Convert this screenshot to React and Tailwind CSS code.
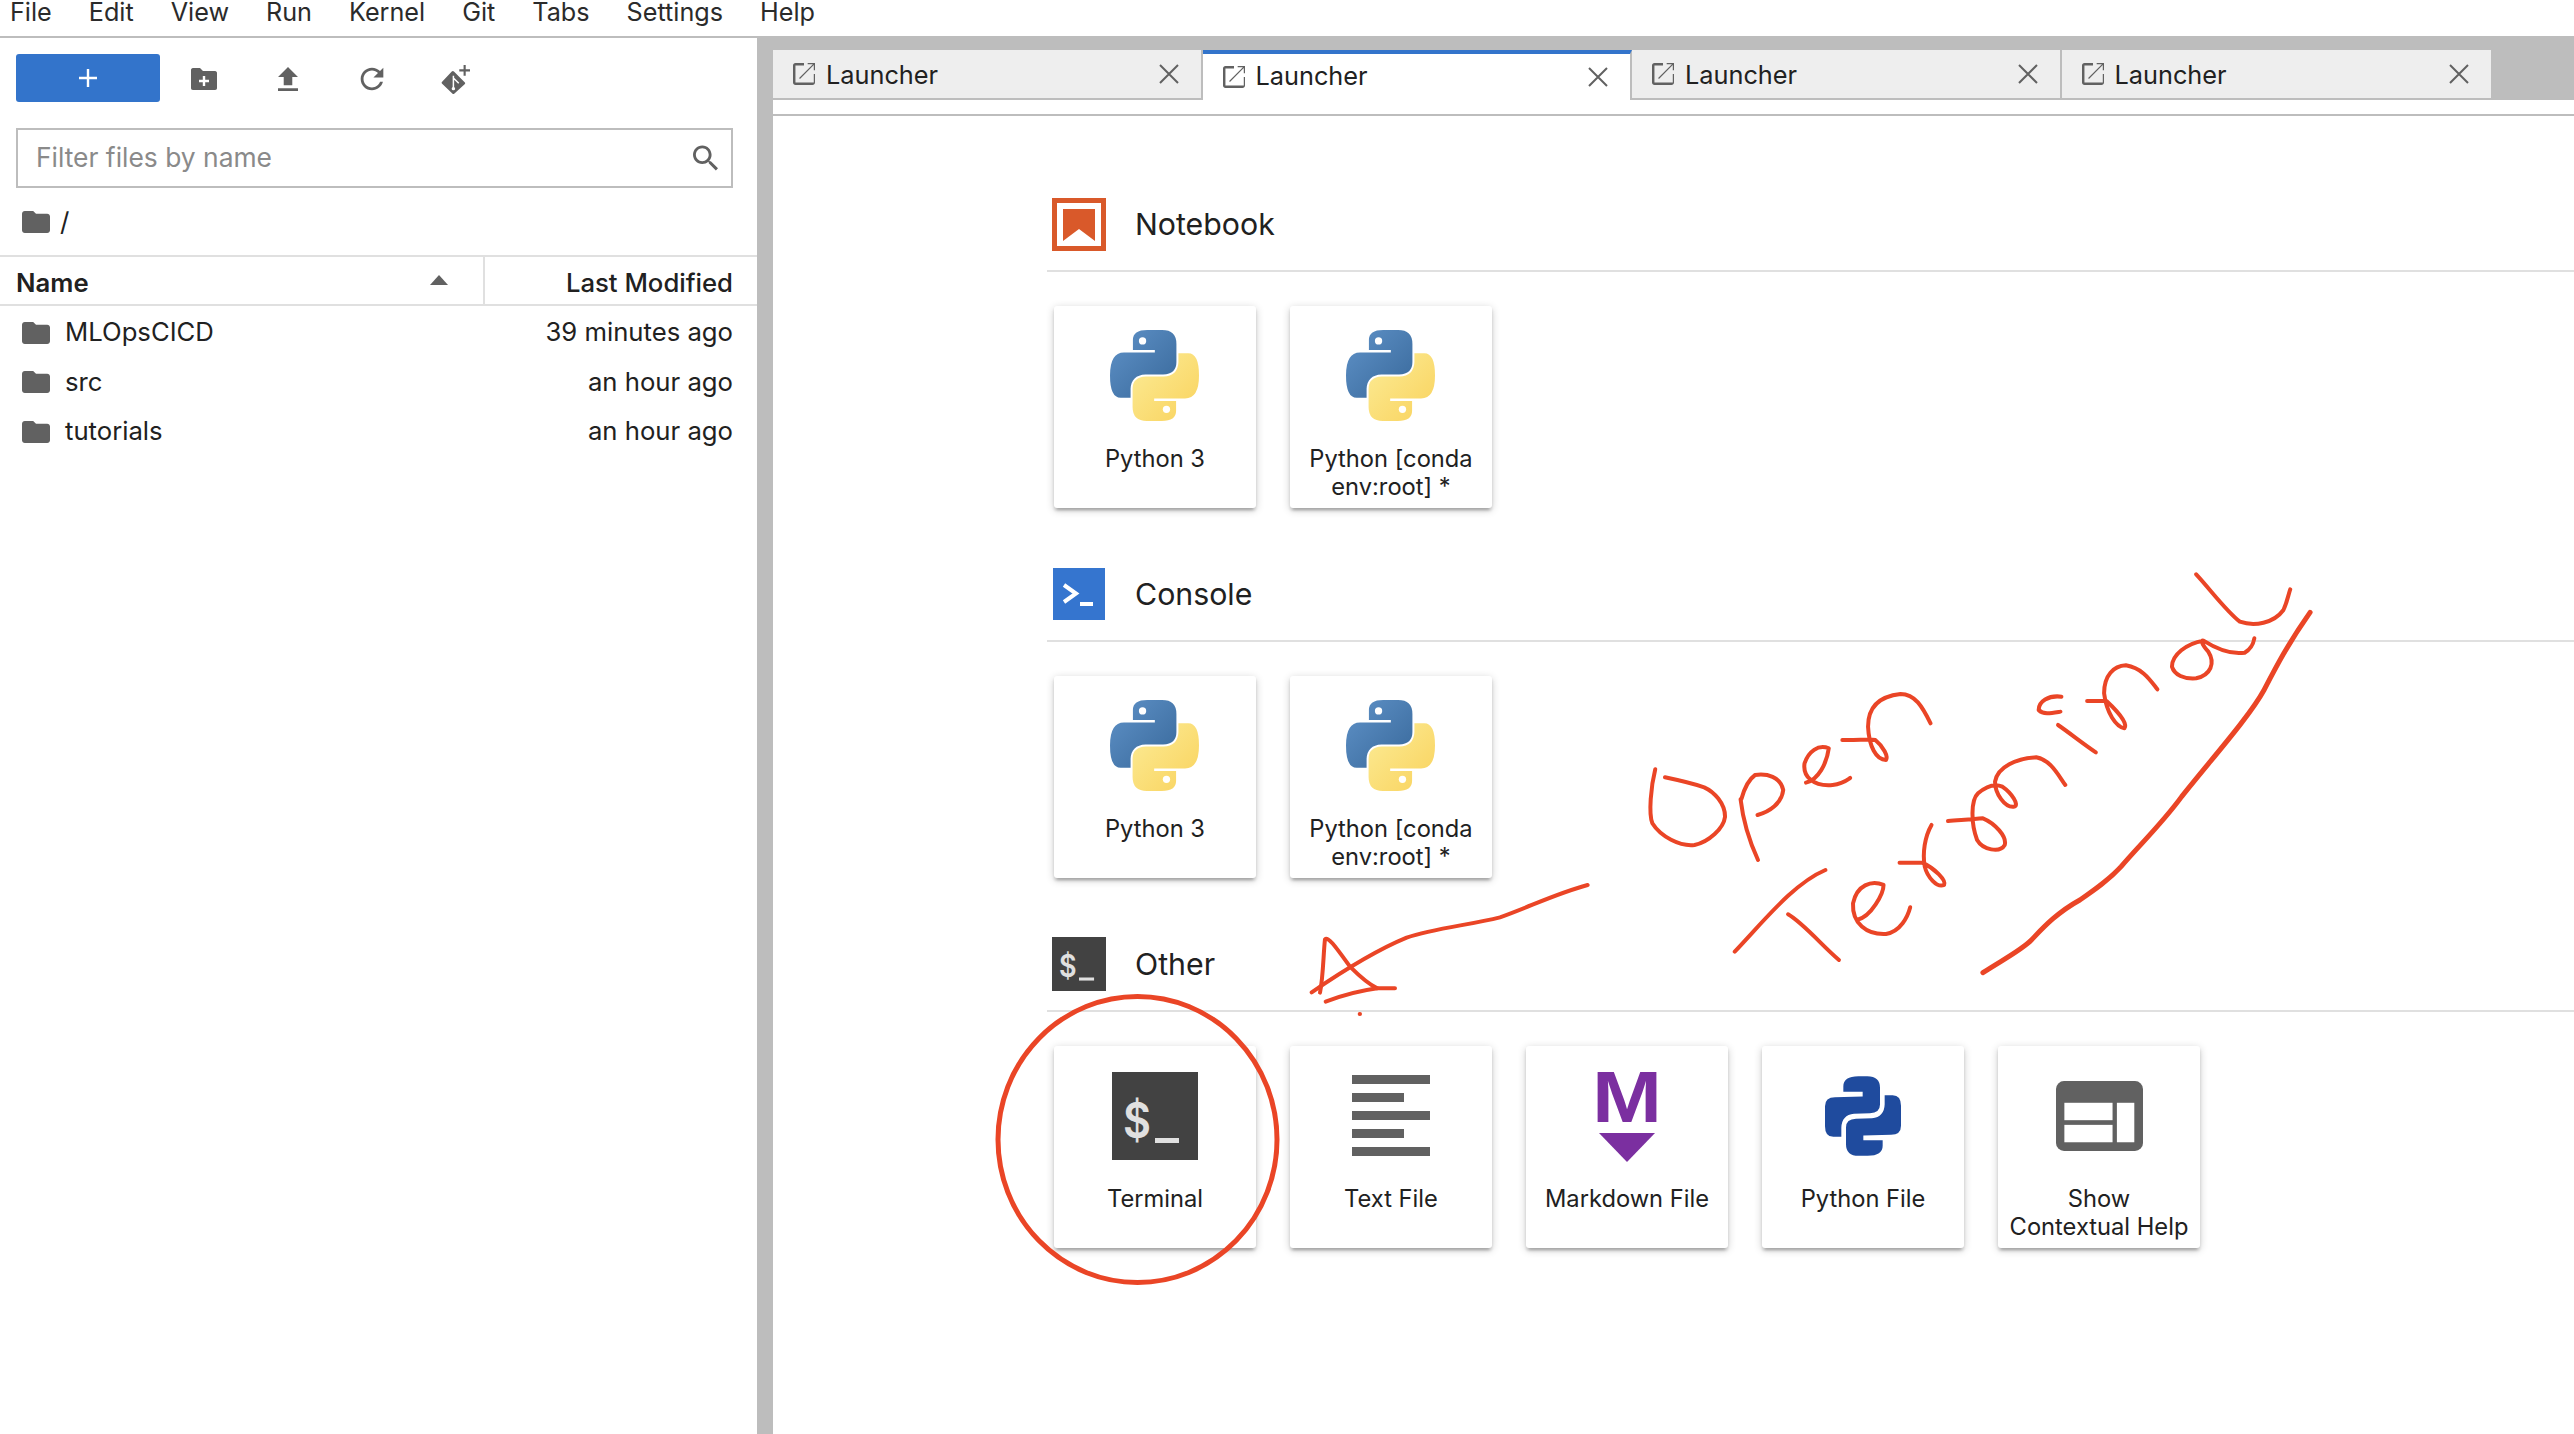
import React from "react";

const menus = ["File", "Edit", "View", "Run", "Kernel", "Git", "Tabs", "Settings", "Help"];

const files = [
  { name: "MLOpsCICD", modified: "39 minutes ago" },
  { name: "src", modified: "an hour ago" },
  { name: "tutorials", modified: "an hour ago" },
];

const tabs = [false, true, false, false];

const FolderIcon = ({ className }) => (
  <svg viewBox="2 4 20 16" preserveAspectRatio="none" className={className} fill="#616161">
    <path d="M10 4H4c-1.1 0-2 .9-2 2v12c0 1.1.9 2 2 2h16c1.1 0 2-.9 2-2V8c0-1.1-.9-2-2-2h-8l-2-2z" />
  </svg>
);

const NewFolderIcon = () => (
  <svg viewBox="0 0 28 24" className="w-[28px] h-[24px]">
    <path fill="#616161" d="M10 1H3C1.6 1 1 2 1 3v18c0 1 .6 2 2 2h22c1.4 0 2-1 2-2V6c0-1-.6-2-2-2H13l-3-3z" />
    <path stroke="#fff" strokeWidth="2.4" d="M14 9v10M9 14h10" />
  </svg>
);

const UploadIcon = () => (
  <svg viewBox="5 3 14 17" className="w-[20px] h-[24px]" preserveAspectRatio="none" fill="#616161">
    <path d="M9 16h6v-6h4l-7-7-7 7h4zm-4 2h14v2H5z" />
  </svg>
);

const RefreshIcon = () => (
  <svg viewBox="0 0 24 24" className="w-[34px] h-[34px]" fill="#616161">
    <path d="M17.65 6.35C16.2 4.9 14.21 4 12 4c-4.42 0-7.99 3.58-7.99 8s3.57 8 7.99 8c3.73 0 6.84-2.55 7.73-6h-2.08c-.82 2.33-3.04 4-5.65 4-3.31 0-6-2.69-6-6s2.69-6 6-6c1.66 0 3.14.69 4.22 1.78L13 11h7V4l-2.35 2.35z" />
  </svg>
);

const GitIcon = () => (
  <svg viewBox="0 0 28 28" className="w-[30px] h-[30px]">
    <path fill="#616161" d="M13 7 L23 17 Q24 18 23 19 L13.5 27.5 Q12.5 28.5 11.5 27.5 L2 18.5 Q1 17.5 2 16.5 L11 7 Q12 6 13 7Z" />
    <path stroke="#fff" strokeWidth="1.4" fill="none" d="M12.5 11v12M12.5 13l5 5" />
    <circle cx="12.5" cy="23" r="1.6" fill="#fff" />
    <path stroke="#616161" strokeWidth="2" d="M23 1v10M18 6h10" />
  </svg>
);

const SearchIcon = () => (
  <svg viewBox="3 3 17.5 17.5" className="w-[25px] h-[26px]" fill="#616161">
    <path d="M15.5 14h-.79l-.28-.27C15.41 12.59 16 11.11 16 9.5 16 5.91 13.09 3 9.5 3S3 5.91 3 9.5 5.91 16 9.5 16c1.61 0 3.09-.59 4.23-1.57l.27.28v.79l5 4.99L20.49 19l-4.99-5zm-6 0C7.01 14 5 11.99 5 9.5S7.01 5 9.5 5 14 7.01 14 9.5 11.99 14 9.5 14z" />
  </svg>
);

const LaunchIcon = () => (
  <svg viewBox="3 3 18 18" className="w-[22px] h-[22px] shrink-0" fill="#616161">
    <path d="M19 19H5V5h7V3H5c-1.11 0-2 .9-2 2v14c0 1.1.89 2 2 2h14c1.1 0 2-.9 2-2v-7h-1v7zM15 3v1h4.3L8 15.3l.7.7L20 4.7V9h1V3h-6z" />
  </svg>
);

const CloseIcon = () => (
  <svg viewBox="0 0 20 20" className="w-[20px] h-[20px] shrink-0" stroke="#616161" strokeWidth="2" fill="none">
    <path d="M1 1l18 18M19 1L1 19" />
  </svg>
);

const NotebookIcon = () => (
  <svg viewBox="0 0 54 53" className="w-[54px] h-[53px]">
    <rect x="2.5" y="2.5" width="49" height="48" fill="#fff" stroke="#d9592a" strokeWidth="5" />
    <path fill="#d9592a" d="M11 11h32v32L27 31 11 43z" />
  </svg>
);

const ConsoleIcon = () => (
  <svg viewBox="0 0 52 52" className="w-[52px] h-[52px] mx-px">
    <rect width="52" height="52" fill="#3575cf" />
    <path d="M11 17l12 8.5L11 34" fill="none" stroke="#fff" strokeWidth="4" />
    <rect x="27" y="34" width="13" height="4" fill="#fff" />
  </svg>
);

const TerminalIcon = ({ small }) => (
  <svg viewBox="0 0 86 88" className={small ? "w-[54px] h-[54px]" : "w-[86px] h-[88px]"} preserveAspectRatio="none">
    <rect width="86" height="88" fill="#424242" />
    <text x="11" y="66" fontSize="50" fontWeight="600" textLength="28" lengthAdjust="spacingAndGlyphs" fontFamily="Inter, sans-serif" fill="#e0e0e0">$</text>
    <rect x="43" y="66" width="24" height="5" fill="#e0e0e0" />
  </svg>
);

const PythonIcon = () => (
  <svg viewBox="208 118 268 274" className="w-[89px] h-[91px] mr-[2px]">
    <defs>
      <linearGradient id="pyBlue" x1="0" y1="0" x2="1" y2="1">
        <stop offset="0" stopColor="#5f92c8" />
        <stop offset="1" stopColor="#38689a" />
      </linearGradient>
      <linearGradient id="pyYellow" x1="0" y1="0" x2="1" y2="1">
        <stop offset="0" stopColor="#fcec97" />
        <stop offset="1" stopColor="#f9d25c" />
      </linearGradient>
    </defs>
    <path fill="url(#pyBlue)" d="M277 178V148Q277 118 320 118H365Q408 118 408 160V215Q408 250 368 252H315Q272 254 270 295V322H240Q208 322 208 255Q208 186 250 186H343V178Z" />
    <path fill="url(#pyYellow)" d="M407 332V362Q407 392 364 392H319Q276 392 276 350V295Q276 260 316 258H369Q412 256 414 215V188H444Q476 188 476 255Q476 324 434 324H341V332Z" />
    <circle cx="306" cy="151" r="11" fill="#fff" />
    <circle cx="378" cy="357" r="11" fill="#fff" />
  </svg>
);

const TextFileIcon = () => (
  <div className="flex flex-col gap-[9px] w-[78px]">
    <div className="h-[9px] w-[78px] bg-[#616161]" />
    <div className="h-[9px] w-[52px] bg-[#616161]" />
    <div className="h-[9px] w-[78px] bg-[#616161]" />
    <div className="h-[9px] w-[52px] bg-[#616161]" />
    <div className="h-[9px] w-[78px] bg-[#616161]" />
  </div>
);

const MarkdownIcon = () => (
  <svg viewBox="0 0 60 94" className="w-[60px] h-[94px] overflow-visible">
    <text x="-5" y="53" textLength="70" lengthAdjust="spacingAndGlyphs" fontSize="73" fontWeight="700" fontFamily="Liberation Sans, sans-serif" fill="#7b2fa0">M</text>
    <path fill="#7b2fa0" d="M2 64h56L30 93z" />
  </svg>
);

const PythonFileIcon = () => (
  <svg viewBox="135 165 228 239" className="w-[76px] h-[80px]" fill="#1f4b9e">
    <path d="M190 212V195Q190 165 235 165H262Q300 165 300 200V250Q300 275 270 276L222 278Q185 282 184 320V347H160Q135 347 135 315V255Q135 228 165 228L248 226V212Z" />
    <path transform="rotate(180 249 284.5)" d="M190 212V195Q190 165 235 165H262Q300 165 300 200V250Q300 275 270 276L222 278Q185 282 184 320V347H160Q135 347 135 315V255Q135 228 165 228L248 226V212Z" />
  </svg>
);

const HelpIcon = () => (
  <svg viewBox="827 180 260 209" className="w-[87px] h-[70px]">
    <rect x="827" y="180" width="260" height="209" rx="24" fill="#616161" />
    <rect x="852" y="245" width="144" height="52" fill="#fff" />
    <rect x="852" y="311" width="144" height="52" fill="#fff" />
    <rect x="1009" y="245" width="52" height="118" fill="#fff" />
  </svg>
);

const Card = ({ icon, label }) => (
  <div className="w-[202px] h-[202px] flex flex-col items-center bg-white rounded-[3px] shadow-[0_2px_8px_0_rgba(0,0,0,0.2),0_3px_3px_0_rgba(0,0,0,0.14),0_5px_2px_-3px_rgba(0,0,0,0.12)]">
    <div className="h-[139px] w-full flex items-center justify-center">{icon}</div>
    <div className="text-[23.7px] leading-[28px] text-center text-[#212121] w-[190px]">{label}</div>
  </div>
);

const Section = ({ icon, title, children }) => (
  <div className="mb-[60px]">
    <div className="flex items-center h-[74px] pb-[20px] pl-[5px] border-b-2 border-[#e0e0e0]">
      <div className="w-[83px]">{icon}</div>
      <div className="text-[30.3px] mt-[2px] text-[#212121]">{title}</div>
    </div>
    <div className="flex gap-[34px] pl-[7px] pt-[34px]">{children}</div>
  </div>
);

// red pen notes drawn on top of the screenshot
const Annotations = () => (
  <svg viewBox="0 0 2574 1434" className="absolute inset-0 w-[2574px] h-[1434px] pointer-events-none" fill="none" stroke="#ea4526" strokeLinecap="round" strokeLinejoin="round">
    <ellipse cx="1137.5" cy="1139.5" rx="139.5" ry="143" strokeWidth="5" />
    <g transform="translate(1290 860) scale(0.3333)" strokeWidth="12">
      <path d="M893 75C800 100 720 140 630 172C540 195 430 205 350 233C260 270 170 325 65 397" />
      <path d="M90 398C100 350 100 280 105 238C115 228 140 265 180 320C210 350 240 375 262 385L315 385" />
      <path d="M107 425C160 405 210 392 262 385" />
      <path d="M209 462h1" />
    </g>
    <g transform="translate(1600 560) scale(0.4847 0.3333)" strokeWidth="4">
      {[
        "M114 628C105 680 100 760 108 790C125 830 165 860 195 855C225 845 255 805 258 770C258 730 235 695 215 682C190 670 160 660 134 652",
        "M290 718C295 780 310 850 326 900",
        "M325 765C350 755 375 730 378 690C372 650 345 640 320 645C305 660 297 690 292 716",
        "M425 668C450 660 468 610 472 565C450 552 430 575 422 610C418 650 440 680 480 675C500 672 510 660 516 654",
        "M500 540C530 542 555 535 568 540C585 560 595 590 590 600C570 600 555 560 553 500C553 450 570 410 620 402C650 402 665 440 682 490",
        "M465 930C400 970 340 1080 278 1175",
        "M388 1063C420 1090 460 1160 493 1200",
        "M530 1080C560 1070 585 1000 585 975C560 960 530 975 522 1030C520 1090 550 1125 590 1122C620 1115 635 1070 640 1042",
        "M618 908L665 908C690 925 715 960 710 975C695 985 675 950 670 920C665 880 670 830 684 795",
        "M718 783C745 780 770 778 790 775C815 790 840 830 835 855C825 880 790 870 778 840C765 790 765 720 780 700C800 675 815 670 830 680C850 700 865 735 855 740C835 745 815 700 815 665C820 620 860 595 900 592C930 600 945 645 960 675",
        "M945 495C970 520 1000 555 1023 577",
        "M952 410C925 405 905 425 905 450C915 465 930 460 950 455",
        "M1005 423L1045 423C1065 450 1090 490 1082 505C1065 500 1045 460 1040 400C1040 345 1060 318 1085 316C1120 325 1135 360 1150 388",
        "M1245 242C1210 250 1180 285 1180 320C1185 345 1205 358 1230 355C1260 345 1270 310 1255 275C1240 250 1240 240 1245 242C1270 265 1300 285 1330 278C1345 265 1348 250 1350 235",
        "M1230 43C1260 90 1290 150 1320 185C1350 200 1390 190 1410 150C1418 125 1420 105 1424 88",
      ].map((d) => (
        <path key={d} d={d} vectorEffect="non-scaling-stroke" />
      ))}
      <path
        d="M790 1238C830 1200 870 1170 890 1140C910 1110 940 1060 990 1020C1020 990 1050 960 1075 920C1110 860 1160 790 1200 710C1260 600 1340 470 1370 390C1395 320 1420 250 1465 157"
        vectorEffect="non-scaling-stroke"
        strokeWidth="5"
      />
    </g>
  </svg>
);

const App = () => {
  return (
    <div className="relative w-[2574px] h-[1434px] overflow-hidden bg-white flex flex-col font-['Inter',sans-serif] text-[#212121]">
      {/* Menu */}
      <div className="h-[36px] shrink-0 flex gap-[37px] pl-[10px] text-[25.2px] leading-[24px] text-[#2b2b2b]">
        {menus.map((m) => (
          <span key={m}>{m}</span>
        ))}
      </div>
      <div className="h-[2px] shrink-0 bg-[#bdbdbd]" />

      <div className="flex flex-1 min-h-0">
        {/* File browser */}
        <div className="w-[757px] shrink-0 flex flex-col">
          <div className="flex items-center h-[48px] mt-[16px] pl-[16px]">
            <div className="w-[144px] h-[48px] rounded-[3px] bg-[#3374cb] flex items-center justify-center">
              <svg viewBox="0 0 20 20" className="w-[20px] h-[20px]" stroke="#fff" strokeWidth="2.4">
                <path d="M10 1v18M1 10h18" />
              </svg>
            </div>
            <div className="w-[88px] flex justify-center pt-[2px]"><NewFolderIcon /></div>
            <div className="w-[80px] flex justify-center pt-[2px]"><UploadIcon /></div>
            <div className="w-[88px] flex justify-center pt-[2px]"><RefreshIcon /></div>
            <div className="w-[78px] flex justify-center pt-[2px]"><GitIcon /></div>
          </div>

          <div className="mt-[26px] ml-[16px] mr-[24px] h-[60px] border-2 border-[#bdbdbd] flex items-center justify-between pl-[18px] pr-[13px]">
            <span className="text-[26.4px] text-[#8a8a8a]">Filter files by name</span>
            <SearchIcon />
          </div>

          <div className="h-[67px] flex items-center pl-[22px] gap-[10px]">
            <FolderIcon className="w-[28px] h-[22px]" />
            <span className="text-[26px]">/</span>
          </div>

          <div className="h-[51px] flex border-y-2 border-[#e0e0e0] text-[25.7px] font-medium">
            <div className="w-[485px] flex items-center justify-between pl-[16px] pr-[35px] pt-[5px] border-r-2 border-[#e0e0e0]">
              <span className="font-semibold">Name</span>
              <svg viewBox="0 0 18 10" className="w-[18px] h-[10px] -mt-[7px]" fill="#616161"><path d="M9 0l9 10H0z" /></svg>
            </div>
            <div className="flex-1 flex items-center justify-end pr-[24px] pt-[5px]">Last Modified</div>
          </div>

          <div className="pt-[2px]">
            {files.map((f) => (
              <div key={f.name} className="h-[49.5px] flex items-center pl-[22px] pr-[24px] text-[25.7px]">
                <FolderIcon className="w-[28px] h-[22px] shrink-0" />
                <span className="ml-[15px] flex-1">{f.name}</span>
                <span>{f.modified}</span>
              </div>
            ))}
          </div>
        </div>

        <div className="w-[16px] shrink-0 bg-[#bdbdbd]" />

        {/* Launcher */}
        <div className="flex-1 min-w-0 flex flex-col">
          <div className="flex h-[62px] shrink-0 bg-[#bdbdbd] pt-[12px]">
            {tabs.map((active, i) => (
              <div
                key={i}
                className={
                  active
                    ? "w-[429.5px] h-[50px] bg-white border-t-4 border-[#3374cb] flex items-center pl-[20px] pr-[22px] border-r-2 border-r-[#bdbdbd]"
                    : "w-[429.5px] h-[50px] bg-[#eeeeee] border-b-2 border-[#bdbdbd] flex items-center pl-[20px] pr-[22px] border-r-2 border-r-[#bdbdbd] last:border-r-0"
                }
              >
                <LaunchIcon />
                <span className={active ? "ml-[11px] flex-1 text-[25.3px] text-[#212121] pb-[2px]" : "ml-[11px] flex-1 text-[25.3px] text-[#212121] pt-[2px]"}>Launcher</span>
                <CloseIcon />
              </div>
            ))}
          </div>
          <div className="h-[16px] shrink-0 bg-white border-b-2 border-[#bdbdbd]" />

          <div className="pl-[274px] pt-[82px]">
            <Section icon={<NotebookIcon />} title="Notebook">
              <Card icon={<PythonIcon />} label="Python 3" />
              <Card icon={<PythonIcon />} label="Python [conda env:root] *" />
            </Section>
            <Section icon={<ConsoleIcon />} title="Console">
              <Card icon={<PythonIcon />} label="Python 3" />
              <Card icon={<PythonIcon />} label="Python [conda env:root] *" />
            </Section>
            <Section icon={<TerminalIcon small />} title="Other">
              <Card icon={<TerminalIcon />} label="Terminal" />
              <Card icon={<TextFileIcon />} label="Text File" />
              <Card icon={<MarkdownIcon />} label="Markdown File" />
              <Card icon={<PythonFileIcon />} label="Python File" />
              <Card icon={<HelpIcon />} label={<>Show<br />Contextual Help</>} />
            </Section>
          </div>
        </div>
      </div>

      <Annotations />
    </div>
  );
};

export default App;
